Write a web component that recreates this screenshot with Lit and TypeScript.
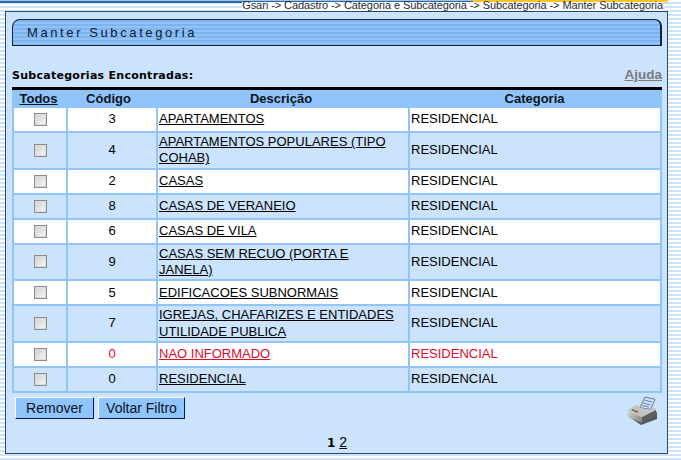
import { LitElement, html, css, svg } from "lit";
import { customElement } from "lit/decorators.js";

type Row = [string, string, string, boolean?];
const rows: Row[] = [
  ["3", "APARTAMENTOS", "RESIDENCIAL"],
  ["4", "APARTAMENTOS POPULARES (TIPO COHAB)", "RESIDENCIAL"],
  ["2", "CASAS", "RESIDENCIAL"],
  ["8", "CASAS DE VERANEIO", "RESIDENCIAL"],
  ["6", "CASAS DE VILA", "RESIDENCIAL"],
  ["9", "CASAS SEM RECUO (PORTA E JANELA)", "RESIDENCIAL"],
  ["5", "EDIFICACOES SUBNORMAIS", "RESIDENCIAL"],
  ["7", "IGREJAS, CHAFARIZES E ENTIDADES UTILIDADE PUBLICA", "RESIDENCIAL"],
  ["0", "NAO INFORMADO", "RESIDENCIAL", true],
  ["0", "RESIDENCIAL", "RESIDENCIAL"],
];

const printer = svg`<svg class="printer" width="32" height="30" viewBox="0 0 32 30">
  <defs>
    <linearGradient id="front" x1="0" y1="0" x2="1" y2="1">
      <stop offset="0" stop-color="#dcdcdc"/><stop offset="1" stop-color="#7d7d7d"/>
    </linearGradient>
  </defs>
  <path d="M2 20 L15 29 L31 23 L31 16 L16 24 Z" fill="#3c3c3c" opacity=".85"/>
  <path d="M19 1 L29 3.3 L24.7 13.3 L13.7 11.7 Z" fill="#cfdff3" stroke="#5c6e82" stroke-width=".9"/>
  <path d="M18.5 4 L26 6 M17 7 L24.5 9 M16 9.5 L23 11" stroke="#5f7fbe" stroke-width="1"/>
  <path d="M1.5 14 L11 8.5 L14 12 L24 13.5 L28 11 L30 14 L16 21 Z" fill="#c4c4c4"/>
  <path d="M1.5 14 L16 21 L16 27 L3 21.5 Q1 20 1.5 14 Z" fill="url(#front)"/>
  <path d="M16 21 L30 14 L30.5 20 L16 27 Z" fill="#5e5e5e"/>
  <path d="M6 13.5 L9 15" stroke="#2f9a3e" stroke-width="1.8"/>
  <path d="M9 15 L12 16.2" stroke="#d83c40" stroke-width="1.8"/>
</svg>`;

@customElement("app-root")
export class AppRoot extends LitElement {
  static styles = css`
    :host {
      display: block;
      width: 681px;
      height: 460px;
      overflow: hidden;
      font-family: "Liberation Sans", Arial, sans-serif;
      color: #000;
      background: repeating-linear-gradient(to bottom, #ffffff 0 2px, #cbe3fb 2px 4px);
    }
    .topbar {
      display: flex;
      height: 3px;
    }
    .topbar .blue {
      flex: 1;
      background: #2f6aa8;
      border-top: 1px solid #9cc3ea;
    }
    .topbar .orange {
      width: 195px;
      margin-right: 13px;
      height: 2px;
      background: #ffc425;
    }
    .crumbrow {
      display: flex;
      justify-content: flex-end;
      height: 8px;
      padding-right: 18px;
    }
    .crumb {
      height: 7px;
      padding-bottom: 2px;
      margin-top: -1px;
      font-size: 11px;
      line-height: 7px;
      letter-spacing: -0.08px;
      white-space: nowrap;
      background: #fff;
      color: #1b2a3b;
    }
    .panel {
      box-sizing: border-box;
      width: 663px;
      height: 443px;
      margin-left: 5px;
      border: 1px solid #2a4a68;
      background: #cbe3fd;
      padding: 7px 5px 0 6px;
    }
    .title {
      box-sizing: border-box;
      width: 650px;
      height: 27px;
      border: 1px solid #10263c;
      border-right-width: 2px;
      border-radius: 8px 7px 0 0;
      background: repeating-linear-gradient(to bottom, #7db3ef 0 2px, #92c3f8 2px 4px);
      padding-left: 14px;
      font-size: 13px;
      line-height: 25px;
      letter-spacing: 2.6px;
      color: #0a1a30;
    }
    .head {
      display: flex;
      justify-content: space-between;
      align-items: flex-end;
      height: 41px;
      padding-bottom: 5px;
      box-sizing: border-box;
    }
    .found {
      font-family: "DejaVu Sans", Verdana, sans-serif;
      font-weight: bold;
      font-size: 11px;
      line-height: 13px;
      letter-spacing: 0.27px;
    }
    .help {
      font-weight: bold;
      font-size: 13.5px;
      line-height: 15px;
      color: #7a7a7a;
      text-decoration: underline;
    }
    .list {
      width: 650px;
      box-sizing: border-box;
      border-top: 3px solid #000;
      background: #90c4fb;
      padding: 0 1px 1px;
    }
    table {
      width: 648px;
      table-layout: fixed;
      border-collapse: separate;
      border-spacing: 0;
      font-size: 13px;
    }
    .c1 { width: 54px; }
    .c2 { width: 90px; }
    .c3, .c4 { width: 252px; }
    th {
      height: 17px;
      padding: 0;
      font-size: 13px;
      line-height: 15px;
      font-weight: bold;
      text-align: center;
      color: #0a1420;
    }
    th u { text-decoration: underline; }
    th.todos { padding-right: 3px; }
    th.code { padding-right: 7px; }
    th.desc { padding-right: 4px; }
    th.cat { padding-right: 1px; }
    td {
      box-sizing: border-box;
      height: 25px;
      padding: 1px;
      border: 1px solid #90c4fb;
      line-height: 16.33px;
      background-clip: padding-box;
    }
    tr.odd td { background-color: #fff; }
    tr.even td { background-color: #cbe3fd; }
    td.center { text-align: center; }
    td.check { text-align: center; padding: 0; }
    td.name { padding-right: 10px; }
    td a { color: inherit; text-decoration: underline; }
    tr.alert td { color: #dc0a2c; }
    input {
      appearance: none;
      display: block;
      box-sizing: border-box;
      width: 13px;
      height: 13px;
      margin: 0 auto;
      border: 1px solid #8c8c8c;
      outline: none;
      background: linear-gradient(135deg, #cfcfcf, #f8f8f8);
      box-shadow: inset 0 0 0 1px #dcdcdc;
    }
    .actions {
      display: flex;
      justify-content: space-between;
      align-items: flex-start;
      margin-top: 3px;
      padding-left: 3px;
      height: 33px;
    }
    .buttons {
      display: flex;
      gap: 4px;
      margin-top: 1px;
    }
    button {
      box-sizing: border-box;
      height: 22px;
      padding: 0;
      border: 1px solid;
      border-color: #fff #07135a #07135a #fff;
      background: #90c4fd;
      font-family: inherit;
      font-size: 14px;
      line-height: 18px;
      color: #0a1420;
    }
    .remove { width: 79px; }
    .back { width: 87px; }
    .printer { margin-right: 4px; display: block; }
    .pages {
      width: 650px;
      margin-top: 5px;
      text-align: center;
      font-size: 14px;
      line-height: 16px;
    }
    .pages b { font-family: "DejaVu Sans", Verdana, sans-serif; font-size: 12px; }
    .pages a { color: inherit; text-decoration: underline; margin-left: 4px; }
  `;

  render() {
    return html`
      <div class="topbar"><div class="blue"></div><div class="orange"></div></div>
      <div class="crumbrow">
        <div class="crumb">Gsan -&gt; Cadastro -&gt; Categoria e Subcategoria -&gt; Subcategoria -&gt; Manter Subcategoria</div>
      </div>
      <div class="panel">
        <div class="title">Manter Subcategoria</div>
        <div class="head">
          <span class="found">Subcategorias Encontradas:</span>
          <a class="help">Ajuda</a>
        </div>
        <div class="list">
          <table>
            <colgroup>
              <col class="c1" /><col class="c2" /><col class="c3" /><col class="c4" />
            </colgroup>
            <thead>
              <tr>
                <th class="todos"><u>Todos</u></th>
                <th class="code">Código</th>
                <th class="desc">Descrição</th>
                <th class="cat">Categoria</th>
              </tr>
            </thead>
            <tbody>
              ${rows.map(
                ([code, desc, cat, alert], i) => html`
                  <tr class="${i % 2 ? "even" : "odd"} ${alert ? "alert" : ""}">
                    <td class="check"><input type="checkbox" /></td>
                    <td class="center">${code}</td>
                    <td class="name"><a>${desc}</a></td>
                    <td>${cat}</td>
                  </tr>
                `,
              )}
            </tbody>
          </table>
        </div>
        <div class="actions">
          <div class="buttons">
            <button class="remove">Remover</button>
            <button class="back">Voltar Filtro</button>
          </div>
          ${printer}
        </div>
        <div class="pages"><b>1</b><a>2</a></div>
      </div>
    `;
  }
}
